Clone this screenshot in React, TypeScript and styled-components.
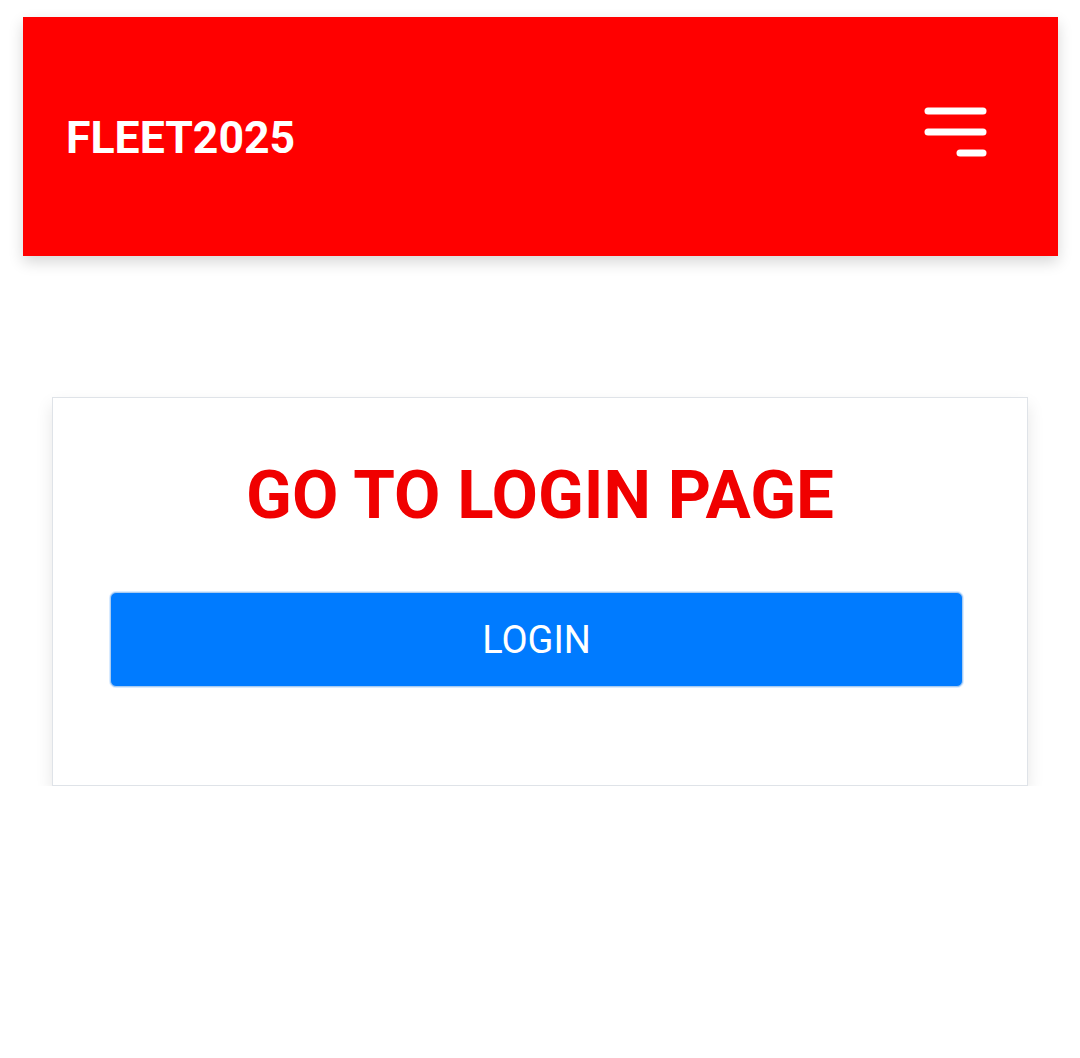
import React from "react";
import styled, { createGlobalStyle } from "styled-components";

const Global = createGlobalStyle`
  html, body { margin: 0; padding: 0; background: #ffffff; }
  body { font-family: Roboto, "Noto Sans", Arial, sans-serif; }
`;

const Page = styled.div`
  padding: 17px 22px 0 23px;
  display: flex;
  flex-direction: column;
`;

const Header = styled.header`
  height: 239px;
  background: #ff0000;
  display: flex;
  align-items: center;
  justify-content: space-between;
  padding: 0 71px 0 43px;
  box-shadow: 0 6px 14px rgba(0, 0, 0, 0.16);
`;

const Brand = styled.div`
  color: #ffffff;
  font-weight: 700;
  font-size: 44.6px;
  letter-spacing: 0;
  margin-top: 3px;
`;

const MenuButton = styled.button`
  background: none;
  border: none;
  padding: 0;
  width: 63px;
  height: 50px;
  margin-top: -9px;
  display: flex;
  cursor: pointer;
`;

const Main = styled.main`
  padding: 141px 52px 0 52px;
`;

const Card = styled.section`
  background: #fff;
  border: 1px solid #dfe3e8;
  box-shadow: 0 8px 16px rgba(0, 0, 0, 0.1);
  padding: 57px 64px 98px 57px;
  display: flex;
  flex-direction: column;
  align-items: stretch;
`;

const Title = styled.h1`
  margin: 0 0 57px;
  text-align: center;
  color: #f00000;
  font-weight: 700;
  font-size: 67.3px;
  line-height: 80px;
  padding-left: 7px;
`;

const LoginButton = styled.button`
  height: 95px;
  background: #007bff;
  border: 1px solid #a9cbf0;
  border-radius: 6px;
  color: #fff;
  font-family: Roboto, "Noto Sans", Arial, sans-serif;
  font-size: 38px;
  font-weight: 400;
  cursor: pointer;
  box-shadow: 0 0 0 1px rgba(0, 123, 255, 0.15);
`;

export default function App() {
  return (
    <>
      <Global />
      <Page>
        <Header>
          <Brand>FLEET2025</Brand>
          <MenuButton aria-label="menu">
            <svg width="63" height="50" viewBox="0 0 63 50">
              <g stroke="#fff" strokeWidth="7" strokeLinecap="round">
                <line x1="4" y1="4" x2="59" y2="4" />
                <line x1="4" y1="25" x2="59" y2="25" />
                <line x1="36" y1="46" x2="59" y2="46" />
              </g>
            </svg>
          </MenuButton>
        </Header>
      </Page>
      <Main>
        <Card>
          <Title>GO TO LOGIN PAGE</Title>
          <LoginButton>LOGIN</LoginButton>
        </Card>
      </Main>
    </>
  );
}
